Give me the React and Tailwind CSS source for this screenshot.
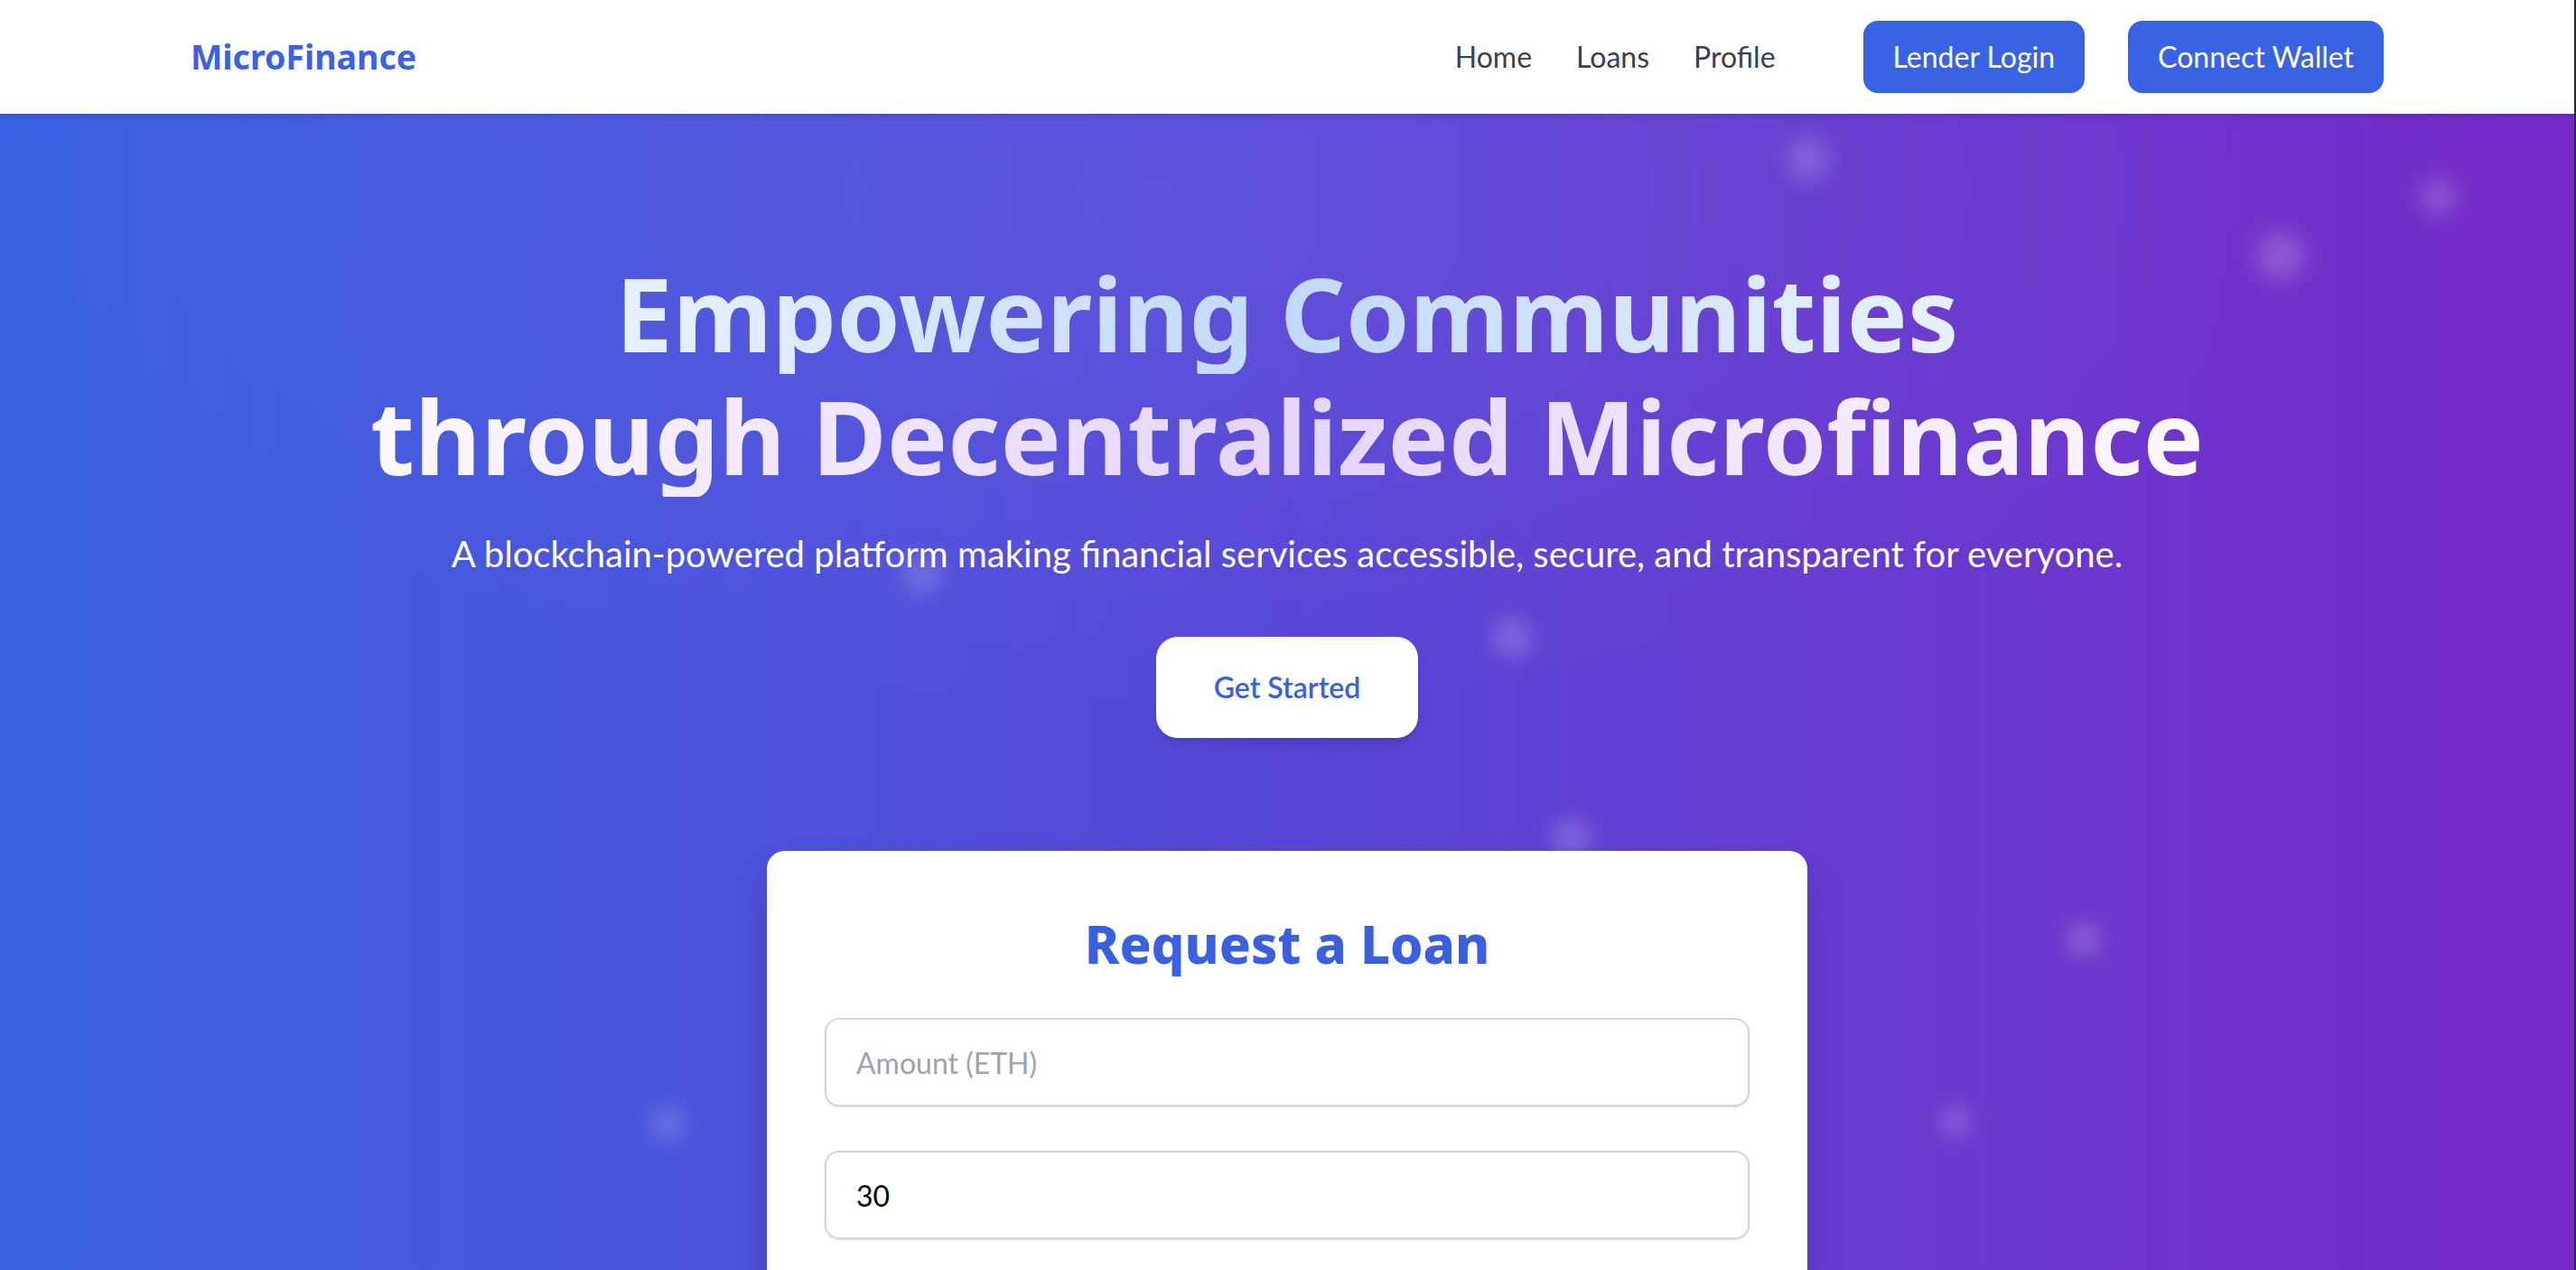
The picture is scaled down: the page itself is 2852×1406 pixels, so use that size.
import React, { useState } from 'react';

const lato = { fontFamily: 'Lato, "Noto Sans", sans-serif' };
const noto = { fontFamily: '"Noto Sans", "Open Sans", sans-serif' };

const particles = [
  { x: 2001, y: 176, s: 44 },
  { x: 2700, y: 218, s: 40 },
  { x: 2525, y: 283, s: 54 },
  { x: 1021, y: 637, s: 40 },
  { x: 1674, y: 706, s: 44 },
  { x: 1740, y: 928, s: 44 },
  { x: 2307, y: 1040, s: 40 },
  { x: 739, y: 1244, s: 36 },
  { x: 2165, y: 1242, s: 36 },
];

const Navbar = () => (
  <nav className="relative z-10 shrink-0 bg-white shadow-md h-[126px]">
    <div className="max-w-[2428px] mx-auto h-full flex items-center justify-between">
      <a href="#" style={noto} className="text-[37.5px] leading-[52px] font-bold text-[#3a62e2]">MicroFinance</a>
      <div className="flex items-center">
        <div style={lato} className="flex items-center gap-[49px] text-[32px] leading-[48px] text-[#374151]">
          <a href="#">Home</a>
          <a href="#">Loans</a>
          <a href="#">Profile</a>
        </div>
        <div style={lato} className="flex items-center gap-[48px] ml-[97px] text-[32px] leading-[48px]">
          <button className="bg-[#3a63e3] text-white px-[33px] py-[16px] rounded-[16px]">Lender Login</button>
          <button className="bg-[#3a63e3] text-white px-[33px] py-[16px] rounded-[16px]">Connect Wallet</button>
        </div>
      </div>
    </div>
  </nav>
);

const inputClass = "h-[98px] w-full border-2 border-[#d1d5db] rounded-[16px] px-[33px] shadow-sm text-[32px] placeholder:text-[#9ca3af] text-black outline-none";

const LoanForm = () => {
  const [amount, setAmount] = useState('');
  const [duration, setDuration] = useState('30');
  return (
    <div className="w-[1152px] mx-auto bg-white rounded-[20px] shadow-2xl px-[64px] pt-[64px] pb-[64px]">
      <h2 style={noto} className="text-center text-[58px] leading-[78px] font-extrabold text-[#3a5fe0] mb-[43px]">Request a Loan</h2>
      <div className="flex flex-col gap-[49px]">
        <input
          type="number"
          placeholder="Amount (ETH)"
          value={amount}
          onChange={e => setAmount(e.target.value)}
          style={lato}
          className={inputClass}
        />
        <input
          type="number"
          placeholder="Duration (days)"
          value={duration}
          onChange={e => setDuration(e.target.value)}
          style={lato}
          className={inputClass}
        />
        <textarea
          placeholder="Purpose of the loan"
          style={lato}
          className="h-[196px] w-full border-2 border-[#d1d5db] rounded-[16px] px-[33px] py-[24px] text-[32px] shadow-sm placeholder:text-[#9ca3af] outline-none"
        />
        <button style={lato} className="w-full h-[98px] bg-[#3a63e3] text-white text-[32px] font-semibold rounded-[16px]">Submit Request</button>
      </div>
    </div>
  );
};

const Hero = () => (
  <section className="relative flex-1 bg-linear-to-r from-[#3761e2] via-[#5746d7] to-[#7629c6]">
    <div className="absolute inset-0 bg-[radial-gradient(ellipse_45%_35%_at_45%_5%,rgba(255,255,255,0.06),transparent)]" />
    {particles.map((p, i) => (
      <div
        key={i}
        className="absolute rounded-full bg-white/20 blur-md"
        style={{ left: p.x - p.s / 2, top: p.y - 126 - p.s / 2, width: p.s, height: p.s }}
      />
    ))}
    <div className="relative max-w-[2428px] mx-auto pt-[152px] flex flex-col items-center text-center">
      <h1 style={noto} className="w-full text-[113px] leading-[136px] font-bold">
        <span className="block bg-linear-to-r from-white via-[#c2d9fb] to-white bg-clip-text text-transparent">Empowering Communities</span>
        <span className="block bg-linear-to-r from-white via-[#e6d4fb] to-white bg-clip-text text-transparent">through Decentralized Microfinance</span>
      </h1>
      <p style={lato} className="mt-[35px] text-[40px] leading-[56px] text-white">
        A blockchain-powered platform making financial services accessible, secure, and transparent for everyone.
      </p>
      <button style={lato} className="mt-[64px] bg-white text-[#3a5fe0] font-semibold text-[32px] leading-[48px] px-[64px] py-[32px] rounded-[24px] shadow-lg">
        Get Started
      </button>
    </div>
    <div className="relative mt-[125px]">
      <LoanForm />
    </div>
  </section>
);

export default function App() {
  return (
    <div className="h-screen overflow-hidden flex">
      <div className="flex-1 flex flex-col min-w-0">
        <Navbar />
        <Hero />
      </div>
      <div className="w-[2px] bg-[#2b2b2b]" />
    </div>
  );
}
